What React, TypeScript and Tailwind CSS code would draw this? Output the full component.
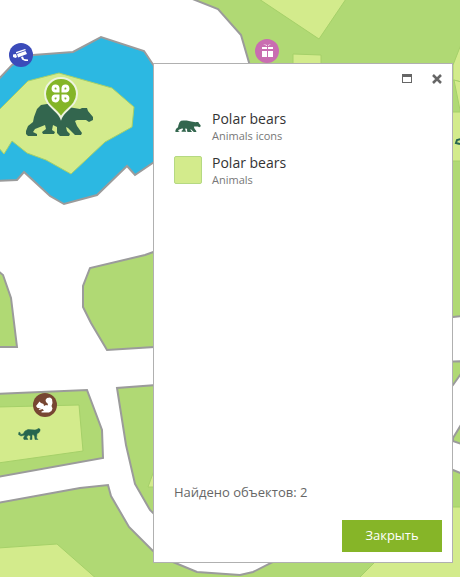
import React from 'react';

const BEAR =
  'M1 28L3 23L8 19L9 14L12 6L16 2L22 1L31 1L43 4L55 6L57 5L62 5L63 8L68 14L68 17L64 19L61 17L52 17L50 18L52 23L57 30L56 32H50L43 25L41 24L42 28L45 31L44 33H35L32 30V24L28 22L27 27L30 29L29 31H18L17 29L21 26L20 22L10 26L8 29L12 31V33H3L1 31Z';

function Bear({ className }: { className?: string }) {
  return (
    <svg viewBox="0 0 69 34" className={className} aria-hidden="true">
      <path d={BEAR} fill="#33664e" />
    </svg>
  );
}

function ZooMap() {
  return (
    <svg
      viewBox="0 0 460 577"
      preserveAspectRatio="xMinYMin slice"
      className="absolute inset-0 h-full w-full"
      role="img"
      aria-label="Zoo map"
    >
      <g fill="#b0d974" stroke="#9b9b9b" strokeWidth="2">
        <path d="M190-2L218 9L241 35L250 66V330L453 317L470 315V-9H190Z" />
        <path d="M-3 270L3 275L11 298L17 347H-3Z" />
        <path d="M170 246L145 255L90 268L83 286V307L91 323L107 350L170 346Z" />
        <path d="M170 384L117 388L126 445L135 484L150 510L170 530L300 500Z" />
        <path d="M-3 394L87 390L102 430L103 458L-3 477Z" />
        <path d="M-3 503L80 488L108 485L111 496L129 527L153 551L173 562L197 572L240 575L253 572L273 562L420 458L453 470L470 477V590H-3Z" />
        <path d="M440 362L470 361L453 385L440 400Z" />
        <path d="M470 410L453 438V441L470 447Z" />
      </g>
      <path
        d="M-3 81L12 65L33 55L73 52L101 37L144 51L160 75V158L135 175L127 166L97 195L64 204L50 196L24 172L17 180L-3 181Z"
        fill="#2cb8e2"
        stroke="#9b9b9b"
        strokeWidth="2"
      />
      <g fill="#d3eb8c" stroke="#a5d069">
        <path d="M-2 111L28 81L59 73L112 88L134 107L132 127L105 142L71 174L46 160L27 153L12 141L4 154L-2 147Z" />
        <path d="M259-1L319 39L346-1Z" />
        <path d="M293 54L321 55V70H293Z" />
        <path d="M470 30L460 47L453 65V80L470 84Z" />
        <path d="M454 80L465 83V130L460 110Z" />
        <path d="M440 112H470V161H440Z" />
        <path d="M-2 407L79 405L83 451L-2 463Z" />
        <path d="M-2 548L57 544L98 580H-2Z" />
        <path d="M155 468L148 487H160Z" />
        <path d="M355 582L430 507H470V582Z" />
      </g>
      <path d={BEAR} fill="#33664e" transform="translate(25 103)" />
      <path
        d="M61 118C58 110 45 106 45 94A16 16 0 0 1 77 94C77 106 64 110 61 118Z"
        fill="#84b527"
        stroke="#eef4df"
        strokeWidth="2"
      />
      <g fill="#84b527" stroke="#fff" strokeWidth="3">
        <path d="M58 91H55A2.500 2.500 0 1 1 58 88Z" />
        <path d="M63 91H66A2.500 2.500 0 1 0 63 88Z" />
        <path d="M58 96H55A2.500 2.500 0 1 0 58 99Z" />
        <path d="M63 96H66A2.500 2.500 0 1 1 63 99Z" />
      </g>
      <circle cx="21" cy="55" r="12" fill="#3b4bba" />
      <g fill="#fff">
        <path d="M16 52L25 49L26 50L16 53.500Z" />
        <path d="M17 54L25.500 51L27 54L18 57.500Z" />
        <path d="M13 54.500L16 54L17 57L15.500 58L13 57Z" />
        <path d="M21 57L23 56.500L24 59L28 59.500V61H25L22 59.500Z" />
      </g>
      <circle cx="267" cy="51" r="12" fill="#c96db1" />
      <path
        d="M262 47H267V49H262ZM268 47H273V49H268ZM262 51H267V57H262ZM268 51H273V57H268ZM263 44L267 45V46ZM271 44L268 45V46Z"
        fill="#fff"
      />
      <circle cx="45" cy="405" r="12" fill="#774632" />
      <path
        d="M36 406L38 403.500L39.500 401.500L41 403L43.500 404L44 406L46 405L47.500 405.500L48 404L46 402L45.500 400L47 398L50 397.500L52 399L52.500 403L51.500 406L52.500 408.500L51.500 411L49 412.500H41.500L41.500 411.500L44 410.500L42.500 409L39.500 410L38.500 409L41 408L37.500 408Z"
        fill="#fff"
      />
      <path
        d="M19 432L20.500 433L20 434.500L23 434L25 431L28 429.500L35 430L37 429.500L38 428.500L40 429L40 431L38.500 433L37 433.500L36.500 438L38 439.500H35L34.500 436L33 434.500L32 435V439.500H30L30.500 436L28.500 435L26.500 437L28 439.500H24L23.500 438L25 435L21 436L18.500 434.500Z"
        fill="#26664f"
        stroke="#26664f"
        strokeWidth="0.500"
      />
      <path d="M461 139L457 140L456 143L460 144" fill="none" stroke="#26664f" strokeWidth="2" />
    </svg>
  );
}

function Result({ layer, children }: { layer: string; children: React.ReactNode }) {
  return (
    <li className="flex h-11 items-center gap-2.5">
      <span className="flex size-7 shrink-0 items-center justify-center">{children}</span>
      <div>
        <p className="text-sm leading-5 text-[#333333]">Polar bears</p>
        <p className="text-[11px] leading-3.5 text-[#777777]">{layer}</p>
      </div>
    </li>
  );
}

export default function App() {
  return (
    <main className="relative flex min-h-screen overflow-hidden bg-white pt-[63px] pr-[7px] pb-3.5 pl-[153px] font-['Open_Sans','Noto_Sans',sans-serif]">
      <ZooMap />
      <section
        role="dialog"
        aria-label="Polar bears"
        className="relative flex grow flex-col border border-[#b0b0b0] bg-white"
      >
        <header className="flex justify-end gap-5 px-2.5 pt-2.5">
          <button aria-label="Maximize" className="text-[#666666]">
            <svg viewBox="0 0 10 10" className="size-2.5">
              <path d="M0 0H10V9H0ZM1 3V8H9V3Z" fill="currentColor" fillRule="evenodd" />
            </svg>
          </button>
          <button aria-label="Close" className="text-[#666666]">
            <svg viewBox="0 0 10 10" className="size-2.5">
              <path d="M1 1L9 9M9 1L1 9" stroke="currentColor" strokeWidth="2.500" />
            </svg>
          </button>
        </header>
        <ul className="grow px-5 pt-5">
          <Result layer="Animals icons">
            <Bear className="w-[26px]" />
          </Result>
          <Result layer="Animals">
            <span className="size-7 rounded-xs border border-[#b5d982] bg-[#d3eb8c]" />
          </Result>
        </ul>
        <p className="px-5 text-[13px] leading-5 text-[#666666]">Найдено объектов: 2</p>
        <footer className="flex justify-end px-2.5 pt-[18px] pb-2.5">
          <button className="h-8 w-[100px] bg-[#86b528] text-[13px] text-white">Закрыть</button>
        </footer>
      </section>
    </main>
  );
}
